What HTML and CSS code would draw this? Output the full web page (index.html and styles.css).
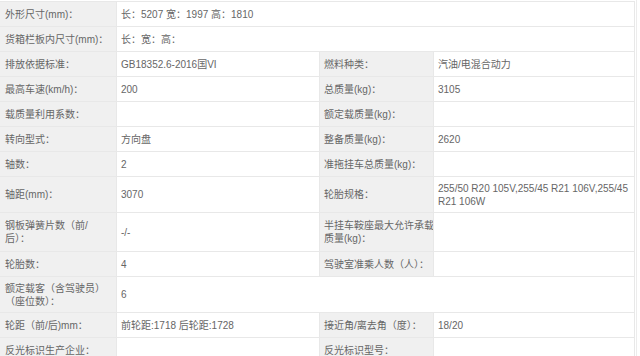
FILE: index.html
```html
<!DOCTYPE html>
<html lang="zh-CN">
<head>
<meta charset="utf-8">
<title>车辆参数</title>
<link rel="stylesheet" href="styles.css">
</head>
<body>
<div class="frame">
<table class="spec">
  <colgroup>
    <col class="c-label1">
    <col class="c-value1">
    <col class="c-label2">
    <col class="c-value2">
  </colgroup>
  <tbody>
    <tr class="r1"><td class="lb">外形尺寸(mm)：</td><td class="vl" colspan="3">长：5207 宽：1997 高：1810</td></tr>
    <tr class="r1"><td class="lb">货箱栏板内尺寸(mm)：</td><td class="vl" colspan="3">长：宽：高：</td></tr>
    <tr class="r1"><td class="lb">排放依据标准：</td><td class="vl">GB18352.6-2016国VI</td><td class="lb">燃料种类：</td><td class="vl">汽油/电混合动力</td></tr>
    <tr class="r1"><td class="lb">最高车速(km/h)：</td><td class="vl">200</td><td class="lb">总质量(kg)：</td><td class="vl">3105</td></tr>
    <tr class="r1"><td class="lb">载质量利用系数：</td><td class="vl"></td><td class="lb">额定载质量(kg)：</td><td class="vl"></td></tr>
    <tr class="r1"><td class="lb">转向型式：</td><td class="vl">方向盘</td><td class="lb">整备质量(kg)：</td><td class="vl">2620</td></tr>
    <tr class="r1"><td class="lb">轴数：</td><td class="vl">2</td><td class="lb">准拖挂车总质量(kg)：</td><td class="vl"></td></tr>
    <tr class="r2"><td class="lb">轴距(mm)：</td><td class="vl">3070</td><td class="lb">轮胎规格：</td><td class="vl">255/50 R20 105V,255/45 R21 106V,255/45<br>R21 106W</td></tr>
    <tr class="r3"><td class="lb">钢板弹簧片数（前/<br>后）：</td><td class="vl">-/-</td><td class="lb">半挂车鞍座最大允许承载<br>质量(kg)：</td><td class="vl"></td></tr>
    <tr class="r1"><td class="lb">轮胎数：</td><td class="vl">4</td><td class="lb">驾驶室准乘人数（人）：</td><td class="vl"></td></tr>
    <tr class="r2"><td class="lb">额定载客（含驾驶员）<br>（座位数）：</td><td class="vl" colspan="3">6</td></tr>
    <tr class="r1"><td class="lb">轮距（前/后)mm：</td><td class="vl">前轮距:1718 后轮距:1728</td><td class="lb">接近角/离去角（度）：</td><td class="vl">18/20</td></tr>
    <tr class="r1"><td class="lb">反光标识生产企业：</td><td class="vl"></td><td class="lb">反光标识型号：</td><td class="vl"></td></tr>
  </tbody>
</table>
</div>
</body>
</html>
```

FILE: styles.css
```css
html, body {
  margin: 0;
  padding: 0;
  background: #ffffff;
}

body {
  font-family: "Liberation Sans", "Noto Sans CJK SC", sans-serif;
  font-size: 10px;
  color: #666666;
}

.frame {
  width: 637px;
  padding-top: 1px;
  border-right: 1px solid #ececec;
  box-sizing: border-box;
}

.spec {
  border-collapse: collapse;
  table-layout: fixed;
  width: 634px;
}

.c-label1 { width: 116px; }
.c-value1 { width: 203px; }
.c-label2 { width: 114px; }
.c-value2 { width: 201px; }

.spec td {
  border: 1px solid #e8e8e8;
  padding: 0 0 0 4px;
  line-height: 13px;
  vertical-align: middle;
  white-space: nowrap;
  overflow: hidden;
}

.spec td.lb {
  background: #f0f0f0;
  border-left-color: #f0f0f0;
}

.spec td.vl {
  background: #ffffff;
}

.spec tr.r1 td { height: 24px; }
.spec tr.r2 td { height: 35px; }
.spec tr.r3 td { height: 38px; }
```
